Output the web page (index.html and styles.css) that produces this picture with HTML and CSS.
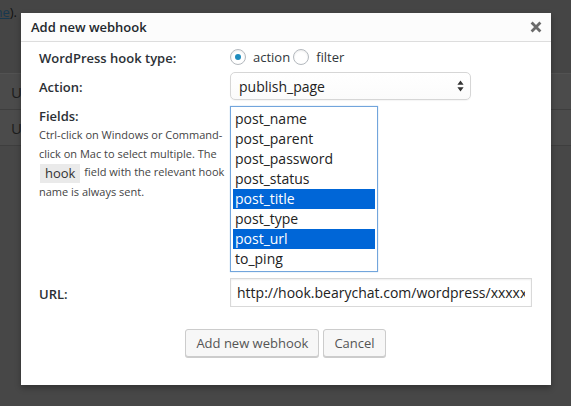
FILE: index.html
```html
<!DOCTYPE html>
<html lang="en">
<head>
<meta charset="utf-8">
<title>Add new webhook</title>
<link rel="stylesheet" href="styles.css">
</head>
<body>
<div class="page">
  <div class="intro">
    <p class="note"><span>Fields are sent using the hook <a href="#">name</a>).</span></p>
  </div>
  <div class="table">
    <div class="trow"><span>U</span></div>
    <div class="trow"><span>U</span></div>
  </div>
</div>

<div class="modal">
  <div class="modal-head">
    <h1 class="modal-title">Add new webhook</h1>
    <span class="close" aria-label="Close">
      <svg width="12" height="12" viewBox="0 0 12 12"><path d="M1.6 1.6 L10.4 10.4 M10.4 1.6 L1.6 10.4" stroke="#6b6b6b" stroke-width="2.8" fill="none"/></svg>
    </span>
  </div>
  <div class="modal-body">
    <div class="form-grid">
      <div class="lbl">WordPress hook type:</div>
      <div class="radios">
        <span class="opt"><span class="radio on"></span>action</span>
        <span class="opt"><span class="radio"></span>filter</span>
      </div>

      <div class="lbl">Action:</div>
      <div class="select">
        <span>publish_page</span>
        <svg width="7" height="12" viewBox="0 0 7 12"><path d="M3.5 0.5 L6.6 4.8 H0.4Z M0.4 7.2 H6.6 L3.5 11.5Z" fill="#333"/></svg>
      </div>

      <div class="lbl lbl-top">Fields:
        <p class="desc">Ctrl-click on Windows or Command-click on Mac to select multiple. The <span class="code">hook</span> field with the relevant hook name is always sent.</p>
      </div>
      <div class="list">
        <div class="item">post_name</div>
        <div class="item">post_parent</div>
        <div class="item">post_password</div>
        <div class="item">post_status</div>
        <div class="item sel">post_title</div>
        <div class="item">post_type</div>
        <div class="item sel">post_url</div>
        <div class="item">to_ping</div>
      </div>

      <div class="lbl">URL:</div>
      <div class="input"><span class="input-text">http://hook.bearychat.com/wordpress/xxxxxxxxxxxxxxxxxxxx</span></div>
    </div>
    <div class="actions">
      <button class="btn" type="button">Add new webhook</button>
      <button class="btn" type="button">Cancel</button>
    </div>
  </div>
</div>
</body>
</html>
```

FILE: styles.css
```css
html, body {
  margin: 0;
  padding: 0;
}

body {
  width: 571px;
  height: 406px;
  overflow: hidden;
  position: relative;
  background: #474747;
  font-family: "Open Sans", "DejaVu Sans", sans-serif;
}

/* dimmed page behind the dialog */
.intro {
  height: 73px;
  background: #454545;
}

.note {
  margin: 0;
  padding-top: 3px;
  width: 17px;
  display: flex;
  justify-content: flex-end;
  overflow: hidden;
  white-space: nowrap;
  font-size: 13px;
  line-height: 18px;
  color: #121212;
}

.note a {
  color: #17384f;
}

.table {
  border-top: 1px solid #525252;
}

.trow {
  height: 35px;
  background: #4b4b4b;
  border-bottom: 1px solid #3e3e3e;
  display: flex;
  align-items: center;
  padding-left: 11px;
  font-size: 15px;
  color: #1c1c1c;
}

/* dialog */
.modal {
  position: absolute;
  left: 21px;
  top: 13px;
  width: 530px;
  height: 372px;
  background: #fff;
  box-shadow: 0 3px 6px rgba(0, 0, 0, 0.3);
  display: flex;
  flex-direction: column;
}

.modal-head {
  height: 29px;
  box-sizing: border-box;
  background: #fcfcfc;
  border-bottom: 1px solid #dddddd;
  display: flex;
  align-items: center;
  justify-content: space-between;
  padding: 0 9px 0 10px;
}

.modal-title {
  margin: 0;
  font-size: 13px;
  font-weight: 600;
  line-height: 18px;
  color: #23282d;
}

.close {
  display: flex;
  width: 12px;
  height: 12px;
}

.modal-body {
  padding: 6px 19px 0 18px;
}

.form-grid {
  display: grid;
  grid-template-columns: 191px 1fr;
  grid-template-rows: 18px 28px 166px 29px;
  row-gap: 6px;
}

.lbl {
  align-self: center;
  padding-top: 2px;
  font-size: 13px;
  font-weight: 600;
  line-height: 18px;
  color: #2b3035;
}

.lbl-top {
  align-self: start;
  padding-top: 0;
  line-height: 20px;
}

.desc {
  margin: 0;
  width: 190px;
  font-size: 11px;
  font-weight: 400;
  line-height: 18.5px;
  color: #444;
}

.code {
  display: inline-block;
  background: #eaeaea;
  padding: 1px 5px;
  margin: 0 1px;
  font-size: 13px;
  line-height: 17px;
  vertical-align: middle;
  color: #333;
}

.radios {
  display: flex;
  align-items: center;
  gap: 3px;
  font-size: 13px;
  color: #32373c;
}

.opt {
  display: inline-flex;
  align-items: center;
  gap: 7px;
  line-height: 18px;
}

.radio {
  width: 16px;
  height: 16px;
  box-sizing: border-box;
  border: 1px solid #b4b9be;
  border-radius: 50%;
  background: #fff;
  box-shadow: inset 0 1px 2px rgba(0, 0, 0, 0.08);
  display: inline-flex;
  align-items: center;
  justify-content: center;
}

.radio.on::before {
  content: "";
  width: 6px;
  height: 6px;
  border-radius: 50%;
  background: #1e8cbe;
}

.select {
  width: 241px;
  height: 28px;
  box-sizing: border-box;
  border: 1px solid #d6d6d6;
  border-radius: 5px;
  background: linear-gradient(#ffffff, #fbfbfb);
  box-shadow: 0 1px 1px rgba(0, 0, 0, 0.04);
  display: flex;
  align-items: center;
  justify-content: space-between;
  padding: 0 6px 0 8px;
  font-size: 14px;
  color: #222;
}

.list {
  width: 148px;
  height: 166px;
  box-sizing: border-box;
  border: 1px solid #72a5dc;
  box-shadow: 0 0 1px rgba(91, 157, 217, 0.6);
  padding: 2px;
  font-size: 14px;
  color: #222;
}

.item {
  height: 20px;
  line-height: 20px;
  padding-left: 2px;
  white-space: nowrap;
}

.item.sel {
  background: #0066d7;
  color: #fff;
}

.input {
  width: 302px;
  height: 29px;
  box-sizing: border-box;
  border: 1px solid #d9d9d9;
  box-shadow: inset 0 1px 2px rgba(0, 0, 0, 0.07);
  padding: 0 6px;
  display: flex;
  align-items: center;
  font-size: 14px;
  color: #222;
}

.input-text {
  flex: 1;
  overflow: hidden;
  white-space: nowrap;
}

.actions {
  display: flex;
  justify-content: center;
  gap: 4px;
  margin-top: 22px;
}

.btn {
  height: 28px;
  box-sizing: border-box;
  margin: 0;
  padding: 0 10px 1px;
  border: 1px solid #cccccc;
  border-radius: 3px;
  background: #f7f7f7;
  box-shadow: 0 1px 0 #cccccc;
  font-family: "Open Sans", "DejaVu Sans", sans-serif;
  font-size: 13px;
  line-height: 26px;
  color: #555;
}
```
